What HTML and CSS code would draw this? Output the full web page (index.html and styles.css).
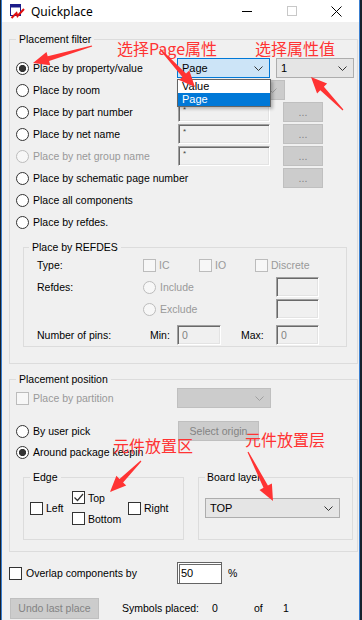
FILE: index.html
```html
<!DOCTYPE html>
<html lang="en">
<head>
    <meta charset="UTF-8">
    <meta name="viewport" content="width=device-width, initial-scale=1.0">
    <title>Quickplace</title>
    <link rel="stylesheet" href="styles.css">
</head>
<body>
<div class="window">
    <div class="titlebar">
        <svg class="app-icon" width="16" height="16" viewBox="0 0 16 16">
            <rect x="1.5" y="1.5" width="10" height="11" fill="#fff" stroke="#1c1c8a"/>
            <rect x="1.5" y="1.5" width="10" height="3" fill="#1c1c8a"/>
            <path d="M2.5 15 L7.5 10 L8.5 13 L15 6" stroke="#e01010" stroke-width="2" fill="none"/>
        </svg>
        <span class="title">Quickplace</span>
        <div class="win-ctrls">
            <span class="wc"><svg width="10" height="10"><line x1="0" y1="5.5" x2="10" y2="5.5" stroke="#000"/></svg></span>
            <span class="wc"><svg width="10" height="10"><rect x="0.5" y="0.5" width="9" height="9" fill="none" stroke="#c8c8c8"/></svg></span>
            <span class="wc"><svg width="11" height="11"><path d="M0.5 0.5 L10.5 10.5 M10.5 0.5 L0.5 10.5" stroke="#000"/></svg></span>
        </div>
    </div>

    <fieldset class="group filter">
        <legend>Placement filter</legend>
        <div class="row">
            <label class="opt"><span class="radio on"></span>Place by property/value</label>
            <div class="combo focus">
                <span>Page</span>
                <svg class="chev" width="9" height="5"><polyline points="0.5,0.5 4.5,4.5 8.5,0.5"/></svg>
                <div class="list">
                    <div class="item">Value</div>
                    <div class="item sel">Page</div>
                </div>
            </div>
            <div class="combo value">
                <span>1</span>
                <svg class="chev" width="9" height="5"><polyline points="0.5,0.5 4.5,4.5 8.5,0.5"/></svg>
            </div>
        </div>
        <div class="row">
            <label class="opt"><span class="radio"></span>Place by room</label>
            <div class="combo off room">
                <span></span>
                <svg class="chev" width="9" height="5"><polyline points="0.5,0.5 4.5,4.5 8.5,0.5"/></svg>
            </div>
        </div>
        <div class="row">
            <label class="opt"><span class="radio"></span>Place by part number</label>
            <div class="edit star">*</div>
            <div class="btn dots">...</div>
        </div>
        <div class="row">
            <label class="opt"><span class="radio"></span>Place by net name</label>
            <div class="edit star">*</div>
            <div class="btn dots">...</div>
        </div>
        <div class="row">
            <label class="opt dis"><span class="radio"></span>Place by net group name</label>
            <div class="edit star">*</div>
            <div class="btn dots">...</div>
        </div>
        <div class="row">
            <label class="opt"><span class="radio"></span>Place by schematic page number</label>
            <div class="btn dots solo">...</div>
        </div>
        <div class="row">
            <label class="opt"><span class="radio"></span>Place all components</label>
        </div>
        <div class="row">
            <label class="opt"><span class="radio"></span>Place by refdes.</label>
        </div>

        <fieldset class="sub">
            <legend>Place by REFDES</legend>
            <div class="srow">
                <span class="cell-label">Type:</span>
                <label class="cell-chk dis"><span class="box"></span>IC</label>
                <label class="cell-chk dis"><span class="box"></span>IO</label>
                <label class="cell-chk dis"><span class="box"></span>Discrete</label>
            </div>
            <div class="srow">
                <span class="cell-label">Refdes:</span>
                <label class="cell-radio dis"><span class="radio"></span>Include</label>
                <div class="edit small"></div>
            </div>
            <div class="srow">
                <span class="cell-label"></span>
                <label class="cell-radio dis"><span class="radio"></span>Exclude</label>
                <div class="edit small"></div>
            </div>
            <div class="srow pins">
                <span class="cell-label">Number of pins:</span>
                <span class="pin-key">Min:</span>
                <div class="edit small wide">0</div>
                <span class="pin-key max">Max:</span>
                <div class="edit small">0</div>
            </div>
        </fieldset>
    </fieldset>

    <fieldset class="group position">
        <legend>Placement position</legend>
        <div class="row">
            <label class="opt dis"><span class="box"></span>Place by partition</label>
            <div class="combo off partition">
                <span></span>
                <svg class="chev" width="9" height="5"><polyline points="0.5,0.5 4.5,4.5 8.5,0.5"/></svg>
            </div>
        </div>
        <div class="row pick">
            <label class="opt"><span class="radio"></span>By user pick</label>
            <div class="btn origin">Select origin</div>
        </div>
        <div class="row keepin">
            <label class="opt"><span class="radio on"></span>Around package keepin</label>
        </div>

        <div class="pos-groups">
            <fieldset class="edge">
                <legend>Edge</legend>
                <div class="edge-grid">
                    <label class="chk left"><span class="box"></span>Left</label>
                    <label class="chk top"><span class="box">
                        <svg width="11" height="11"><polyline points="1.5,5.5 4.5,8.5 10,2" fill="none" stroke="#333" stroke-width="1.2"/></svg>
                    </span>Top</label>
                    <label class="chk bottom"><span class="box"></span>Bottom</label>
                    <label class="chk right"><span class="box"></span>Right</label>
                </div>
            </fieldset>
            <fieldset class="board">
                <legend>Board layer</legend>
                <div class="combo layer">
                    <span>TOP</span>
                    <svg class="chev" width="9" height="5"><polyline points="0.5,0.5 4.5,4.5 8.5,0.5"/></svg>
                </div>
            </fieldset>
        </div>
    </fieldset>

    <div class="row overlap">
        <label class="chk"><span class="box"></span><span class="overlap-text">Overlap components by</span></label>
        <div class="edit focus">50</div>
        <span class="pct">%</span>
    </div>

    <div class="row footer">
        <div class="btn undo">Undo last place</div>
        <span class="k1">Symbols placed:</span>
        <span class="k2">0</span>
        <span class="k3">of</span>
        <span>1</span>
    </div>

    <!-- red notes drawn over the dialog -->
    <span class="note note-page">选择Page属性</span>
    <span class="note note-value">选择属性值</span>
    <span class="note note-area">元件放置区</span>
    <span class="note note-layer">元件放置层</span>
    <svg class="arrows" width="362" height="620" viewBox="0 0 362 620">
        <polygon points="91.8,45.4 47.7,56.2 46.5,51.9 33,63 50.3,65.3 49.1,61.0 92.2,46.6"/>
        <polygon points="159.6,49.4 182.4,76.9 179.0,79.9 195,87 189.3,70.5 186.0,73.5 160.4,48.6"/>
        <polygon points="343.4,109.6 323.9,86.8 327.1,83.6 311,77 317.1,93.4 320.3,90.2 342.6,110.4"/>
        <polygon points="140.6,460.6 119.5,478.9 116.4,475.8 110,492 126.2,485.6 123.1,482.5 141.4,461.4"/>
        <polygon points="247.5,452.3 263.5,487.8 259.5,489.9 273,501 271.9,483.5 267.9,485.6 248.5,451.7"/>
    </svg>
</div>
</body>
</html>
```

FILE: styles.css
```css
* { box-sizing: border-box; }
body {
    margin: 0;
    background: #17202c;
    font-family: "Liberation Sans", Arial, sans-serif;
    font-size: 10.5px;
    color: #000;
}
.window {
    position: relative;
    width: 359px;
    height: 620px;
    margin-left: 1px;
    border-left: 1px solid #3a7fd0;
    border-right: 1px solid #3a7fd0;
    background: #f0f0f0;
    overflow: hidden;
}

/* title bar */
.titlebar { display: flex; align-items: center; height: 22px; background: #fff; }
.app-icon { margin-left: 7px; }
.title { margin-left: 6px; font-family: "Noto Sans", sans-serif; font-size: 12px; }
.win-ctrls { margin-left: auto; display: flex; height: 100%; }
.wc { width: 45px; display: flex; align-items: center; justify-content: center; }

/* group boxes */
fieldset { border: 1px solid #dcdcdc; min-width: 0; }
legend { padding: 0 3px; line-height: 14px; }
.group { margin: 10px 1px 0 7px; padding: 11px 2px 16px 6px; }
.position { margin-top: 8px; padding: 1px 2px 11px 6px; }
.sub { margin: 7px 8px 0 7px; padding: 0 0 0 13px; }
.sub legend { margin-left: -8px; }

.row { display: flex; align-items: center; height: 22px; white-space: nowrap; }
.opt { flex: none; width: 161px; display: flex; align-items: center; }
.dis { color: #999; }

.radio {
    flex: none;
    width: 13px; height: 13px;
    border: 1px solid #333;
    border-radius: 50%;
    background: #fff;
    margin-right: 4px;
}
.radio.on { background: radial-gradient(circle, #333 0 3.3px, #fff 3.9px); }
.box {
    flex: none;
    width: 13px; height: 13px;
    border: 1px solid #333;
    background: #fff;
    margin-right: 4px;
    display: flex; align-items: center; justify-content: center;
}
.dis .radio, .dis .box { border-color: #bcbcbc; background: #f7f7f7; }

/* combos */
.combo {
    flex: none;
    display: flex; align-items: center; justify-content: space-between;
    height: 20px;
    padding: 0 6px 0 4px;
    border: 1px solid #adadad;
    background: #e5e5e5;
    font-size: 11px;
}
.chev polyline { fill: none; stroke: #333; }
.combo.focus { position: relative; width: 93px; border-color: #0078d7; background: #cce4f7; }
.combo.value { width: 78px; margin-left: 6px; }
.combo.off { border-color: #bfbfbf; background: #ccc; }
.combo.off .chev polyline { stroke: #a0a0a0; }
.combo.room { width: 108px; padding-right: 7px; }
.combo.partition { width: 94px; }
.combo.layer { width: 135px; margin-top: 14px; }

.list {
    position: absolute;
    top: 20px; left: -1px;
    width: 94px;
    border: 1px solid #646464;
    background: #fff;
    box-shadow: 2px 2px 3px rgba(0,0,0,0.25);
}
.item { height: 13px; line-height: 13px; padding-left: 4px; }
.item.sel { background: #0078d7; color: #fff; }

/* edits and buttons */
.edit {
    flex: none;
    height: 20px;
    border: 1px solid;
    border-color: #a0a0a0 #fff #fff #a0a0a0;
    box-shadow: inset 1px 1px 0 #696969, inset -1px -1px 0 #e3e3e3;
    background: #f0f0f0;
    color: #838383;
}
.edit.star { width: 92px; margin-left: 1px; padding: 3px 4px; font-size: 8px; line-height: 8px; color: #444; }
.edit.small { width: 43px; padding: 0 4px; line-height: 18px; }
.edit.small.wide { width: 44px; }
.edit.focus {
    width: 45px; height: 22px;
    border-color: #646464;
    background: #fff;
    color: #000;
    box-shadow: inset 1px 1px 0 #fff, inset 2px 2px 0 #696969;
    padding: 0 3px;
    line-height: 20px;
    font-size: 11px;
}
.btn {
    flex: none;
    height: 20px;
    border: 1px solid #bfbfbf;
    background: #ccc;
    color: #838383;
    display: flex; align-items: center; justify-content: center;
}
.btn.dots { width: 40px; margin-left: 13px; }
.btn.dots.solo { margin-left: 106px; }
.btn.origin { width: 81px; margin-left: 1px; }
.btn.undo { width: 89px; height: 21px; }

/* refdes sub group */
.srow { display: flex; align-items: center; height: 22px; white-space: nowrap; }
.srow.pins { margin-top: 4px; }
.cell-label { flex: none; width: 106px; }
.pins .cell-label { width: 113px; }
.cell-chk { flex: none; width: 56px; display: flex; align-items: center; }
.cell-chk .box { margin-right: 3px; }
.cell-radio { flex: none; width: 133px; display: flex; align-items: center; }
.pin-key { flex: none; width: 27px; }
.pin-key.max { margin-left: 20px; width: 35px; }

/* placement position */
.row.pick { margin-top: 11px; }
.row.keepin { height: 20px; }
.pos-groups { display: flex; margin: 8px 0 0 7px; }
.edge { margin: 0; width: 161px; padding: 3px 0 10px 6px; }
.board { margin: 0 0 0 14px; width: 155px; padding: 0 0 10px 6px; }
.board legend { padding: 0 2px; }
.edge-grid {
    display: grid;
    grid-template-columns: 42px 56px auto;
    grid-template-rows: 21px 21px;
    align-items: center;
}
.chk { display: flex; align-items: center; white-space: nowrap; }
.chk .box { margin-right: 3px; }
.edge-grid .left { grid-column: 1; grid-row: 1 / 3; }
.edge-grid .top { grid-column: 2; grid-row: 1; }
.edge-grid .bottom { grid-column: 2; grid-row: 2; }
.edge-grid .right { grid-column: 3; grid-row: 1 / 3; }

/* bottom rows */
.overlap { margin-top: 10px; padding-left: 7px; }
.overlap .box { margin-right: 4px; }
.overlap-text { width: 151px; }
.pct { margin-left: 6px; }
.footer { margin-top: 13px; padding-left: 8px; }
.k1 { margin-left: 23px; width: 90px; }
.k2 { width: 42px; }
.k3 { width: 29px; }

/* red annotations */
.note {
    position: absolute;
    font-family: "Noto Sans CJK SC", "Noto Sans", sans-serif;
    font-size: 16px;
    line-height: 16px;
    color: #ff3333;
    white-space: nowrap;
}
.note-page { left: 115px; top: 40px; }
.note-value { left: 253px; top: 40px; }
.note-area { left: 111px; top: 437px; }
.note-layer { left: 243px; top: 431px; }
.arrows { position: absolute; left: -2px; top: 0; pointer-events: none; }
.arrows polygon { fill: #ff3333; }
```
